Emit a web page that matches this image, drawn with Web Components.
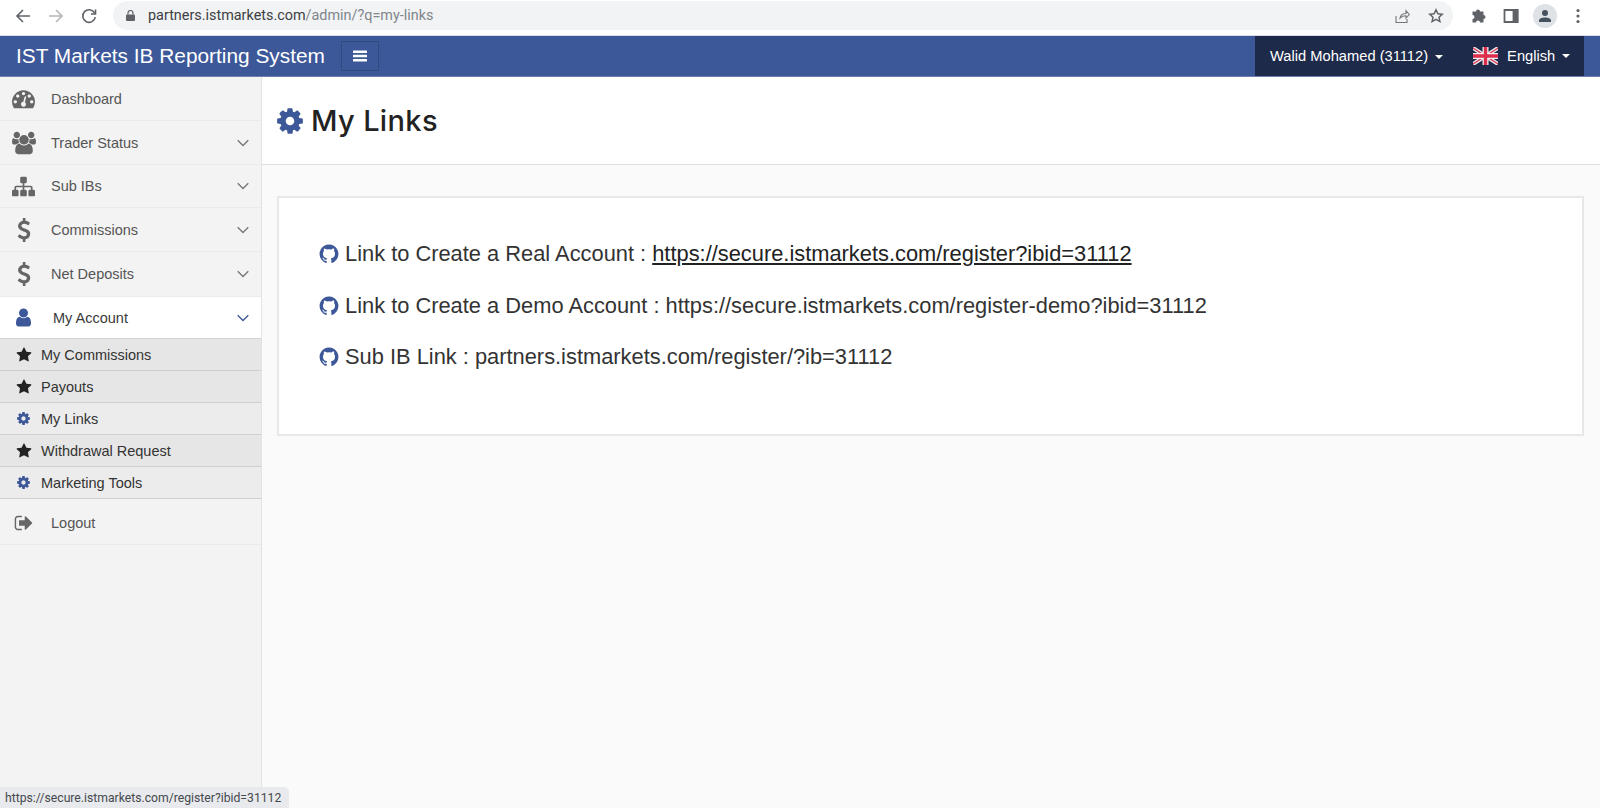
<!DOCTYPE html>
<html lang="en">
<head>
<meta charset="utf-8">
<title>My Links</title>
<style>
  html, body { margin: 0; height: 100%; overflow: hidden; }
  body { font-family: "Liberation Sans", Arial, sans-serif; display: flex; flex-direction: column; height: 808px; background: #fafafa; }
</style>
</head>
<body>
<browser-bar url-host="partners.istmarkets.com" url-path="/admin/?q=my-links"></browser-bar>
<top-header title="IST Markets IB Reporting System" user="Walid Mohamed (31112)" lang="English"></top-header>
<app-shell>
  <side-nav slot="nav">
    <nav-item icon="dashboard" label="Dashboard" h="44"></nav-item>
    <nav-item icon="users" label="Trader Status" arrow h="44"></nav-item>
    <nav-item icon="sitemap" label="Sub IBs" arrow h="43"></nav-item>
    <nav-item icon="dollar" label="Commissions" arrow h="44"></nav-item>
    <nav-item icon="dollar" label="Net Deposits" arrow h="45"></nav-item>
    <nav-item icon="user" label="My Account" arrow active h="42"></nav-item>
    <sub-item icon="star" label="My Commissions"></sub-item>
    <sub-item icon="star" label="Payouts"></sub-item>
    <sub-item icon="cog" label="My Links"></sub-item>
    <sub-item icon="star" label="Withdrawal Request"></sub-item>
    <sub-item icon="cog" label="Marketing Tools"></sub-item>
    <nav-item icon="signout" label="Logout" h="44" gap></nav-item>
  </side-nav>
  <page-title>My Links</page-title>
  <link-card>
    <link-row label="Link to Create a Real Account : "><u>https://secure.istmarkets.com/register?ibid=31112</u></link-row>
    <link-row label="Link to Create a Demo Account : ">https://secure.istmarkets.com/register-demo?ibid=31112</link-row>
    <link-row label="Sub IB Link : ">partners.istmarkets.com/register/?ib=31112</link-row>
  </link-card>
</app-shell>
<status-bubble>https://secure.istmarkets.com/register?ibid=31112</status-bubble>

<script>
const ICONS = {
  cog: ['0 0 1792 1792', 'M1152 896q0-106-75-181t-181-75-181 75-75 181 75 181 181 75 181-75 75-181zm512-109v222q0 12-8 23t-20 13l-185 28q-19 54-39 91 35 50 107 138 10 12 10 25t-9 23q-27 37-99 108t-94 71q-12 0-26-9l-138-108q-44 23-91 38-16 136-29 186-7 28-36 28h-222q-14 0-24.500-8.500t-11.500-21.500l-28-184q-49-16-90-37l-141 107q-10 9-25 9-14 0-25-11-126-114-165-168-7-10-7-23 0-12 8-23 15-21 51-66.500t54-70.500q-27-50-41-99l-183-27q-13-2-21-12.500t-8-23.500v-222q0-12 8-23t19-13l186-28q14-46 39-92-40-57-107-138-10-12-10-24 0-10 9-23 26-36 98.500-107.500t94.500-71.500q13 0 26 10l138 107q44-23 91-38 16-136 29-186 7-28 36-28h222q14 0 24.500 8.500t11.500 21.500l28 184q49 16 90 37l142-107q9-9 24-9 13 0 25 10 129 119 165 170 7 8 7 22 0 12-8 23-15 21-51 66.500t-54 70.500q26 50 41 98l183 28q13 2 21 12.500t8 23.500z'],
  star: ['0 0 1792 1792', 'M1728 647q0 22-26 48l-363 354 86 500q1 7 1 20 0 21-10.500 35.500t-30.500 14.500q-19 0-40-12l-449-236-449 236q-22 12-40 12-21 0-31.500-14.500t-10.500-35.500q0-6 2-20l86-500-364-354q-25-27-25-48 0-37 56-46l502-73 225-455q19-41 49-41t49 41l225 455 502 73q56 9 56 46z'],
  user: ['0 0 1792 1792', 'M1536 1399q0 109-62.500 187t-150.500 78h-854q-88 0-150.500-78t-62.500-187q0-85 8.500-160.500t31.500-152 58.500-131 94-89 134.500-34.500q131 128 313 128t313-128q76 0 134.500 34.500t94 89 58.500 131 31.500 152 8.500 160.500zm-256-887q0 159-112.500 271.500t-271.500 112.500-271.500-112.500-112.500-271.500 112.500-271.500 271.500-112.500 271.500 112.500 112.500 271.500z'],
  users: ['0 0 1920 1792', 'M593 896q-162 5-265 128h-134q-82 0-138-40.500t-56-118.500q0-353 124-353 6 0 43.500 21t97.500 42.500 119 21.500q67 0 133-23-5 37-5 66 0 139 81 256zm1071 637q0 120-73 189.500t-194 69.500h-874q-121 0-194-69.500t-73-189.500q0-53 3.500-103.500t14-109 26.500-108.500 43-97.500 62-81 85.500-53.500 111.500-20q10 0 43 21.500t73 48 107 48 135 21.500 135-21.500 107-48 73-48 43-21.500q61 0 111.500 20t85.500 53.500 62 81 43 97.500 26.500 108.500 14 109 3.500 103.500zm-1024-1277q0 106-75 181t-181 75-181-75-75-181 75-181 181-75 181 75 75 181zm704 384q0 159-112.500 271.500t-271.500 112.500-271.500-112.500-112.500-271.500 112.500-271.500 271.500-112.500 271.500 112.500 112.500 271.500zm576 225q0 78-56 118.500t-138 40.500h-134q-103-123-265-128 81-117 81-256 0-29-5-66 66 23 133 23 59 0 119-21.500t97.500-42.500 43.500-21q124 0 124 353zm-128-609q0 106-75 181t-181 75-181-75-75-181 75-181 181-75 181 75 75 181z'],
  sitemap: ['0 0 1792 1792', 'M1792 1248v320q0 40-28 68t-68 28h-320q-40 0-68-28t-28-68v-320q0-40 28-68t68-28h96v-192h-512v192h96q40 0 68 28t28 68v320q0 40-28 68t-68 28h-320q-40 0-68-28t-28-68v-320q0-40 28-68t68-28h96v-192h-512v192h96q40 0 68 28t28 68v320q0 40-28 68t-68 28h-320q-40 0-68-28t-28-68v-320q0-40 28-68t68-28h96v-192q0-52 38-90t90-38h512v-192h-96q-40 0-68-28t-28-68v-320q0-40 28-68t68-28h320q40 0 68 28t28 68v320q0 40-28 68t-68 28h-96v192h512q52 0 90 38t38 90v192h96q40 0 68 28t28 68z'],
  dollar: ['0 0 1792 1792', 'M1362 1185q0 153-99.500 263.500t-258.500 136.500v175q0 14-9 23t-23 9h-135q-13 0-22.500-9.500t-9.500-22.500v-175q-66-9-127.500-31t-101.500-44.500-74-48-46.500-37.500-17.500-18q-17-21-2-41l103-135q7-10 23-12 15-2 24 9l2 2q113 99 243 125 37 8 74 8 81 0 142.500-43t61.500-122q0-28-15-53t-33.500-42-58.500-37.500-66-32-80-32.500q-39-16-61.500-25t-61.500-26.500-62.500-31-56.500-35.500-53.500-42.500-43.500-49-35.500-58-21-66.500-8.500-78q0-138 98-242t255-134v-180q0-13 9.500-22.500t22.500-9.500h135q14 0 23 9t9 23v176q57 6 110.500 23t87 33.500 63.500 37.500 39 29 15 14q17 18 5 38l-81 146q-8 15-23 16-14 3-27-7-3-3-14.500-12t-39-26.500-58.500-32-74.500-26-85.500-11.500q-95 0-155 43t-60 111q0 26 8.500 48t29.500 41.500 39.500 33 56 31 60.500 27 70 27.500q53 20 81 31.500t76 35 75.500 42.500 62 50 53 63.500 31.500 76.500 13 94z'],
  signout: ['0 0 1792 1792', 'M704 1440q0 4 1 20t.5 26.500-3 23.500-10 19.500-20.500 6.500h-320q-119 0-203.500-84.500t-84.500-203.500v-704q0-119 84.500-203.500t203.500-84.500h320q13 0 22.500 9.500t9.500 22.500q0 4 1 20t.5 26.500-3 23.500-10 19.500-20.500 6.500h-320q-66 0-113 47t-47 113v704q0 66 47 113t113 47h312l11.500 1 11.500 3 8 5.500 7 9 2 13.500zm928-544q0 26-19 45l-544 544q-19 19-45 19t-45-19-19-45v-288h-448q-26 0-45-19t-19-45v-384q0-26 19-45t45-19h448v-288q0-26 19-45t45-19 45 19l544 544q19 19 19 45z'],
  github: ['0 0 1792 1792', 'M896 128q209 0 385.500 103t279.500 279.500 103 385.500q0 251-146.500 451.500t-378.500 277.500q-27 5-40-7t-13-30q0-3 .5-76.500t.5-134.500q0-97-52-142 57-6 102.500-18t94-39 81-66.500 53-105 20.500-150.500q0-119-79-206 37-91-8-204-28-9-81 11t-92 44l-38 24q-93-26-192-26t-192 26q-16-11-42.500-27t-83.500-38.500-85-13.500q-45 113-8 204-79 87-79 206 0 85 20.500 150t52.500 105 80.500 67 94 39 102.500 18q-39 36-49 103-21 10-45 15t-57 5-65.500-21.500-55.500-62.500q-19-32-48.500-52t-49.500-24l-20-3q-21 0-29 4.500t-5 11.500 9 14 13 12l7 5q22 10 43.500 38t31.500 51l10 23q13 38 44 61.500t67 30 69.500 7 55.500-3.500l23-4q0 38 .5 88.500t.5 54.500q0 18-13 30t-40 7q-232-77-378.500-277.500t-146.500-451.500q0-209 103-385.500t279.500-279.500 385.500-103z'],
  dashboard: ['0 0 1792 1792', 'M384 1152q0-53-37.500-90.500t-90.500-37.500-90.500 37.500-37.500 90.500 37.500 90.500 90.500 37.500 90.500-37.500 37.500-90.500zm192-448q0-53-37.500-90.500t-90.500-37.500-90.500 37.500-37.500 90.500 37.500 90.500 90.500 37.500 90.500-37.500 37.500-90.500zm428 481l101-382q6-26-7.500-48.500t-38.500-29.500-48 6.500-30 39.500l-101 382q-60 5-107 43.500t-63 98.500q-20 77 20 146t117 89 146-20 89-117q16-60-6-117t-72-91zm660-33q0-53-37.500-90.500t-90.500-37.500-90.500 37.500-37.500 90.500 37.500 90.500 90.500 37.500 90.500-37.500 37.500-90.500zm-640-640q0-53-37.500-90.500t-90.500-37.500-90.500 37.500-37.500 90.500 37.500 90.500 90.500 37.500 90.500-37.500 37.500-90.500zm448 192q0-53-37.500-90.500t-90.500-37.500-90.500 37.500-37.500 90.500 37.500 90.500 90.500 37.500 90.500-37.500 37.500-90.500zm320 448q0 261-141 483-19 29-54 29h-1402q-35 0-54-29-141-221-141-483 0-182 71-348t191-286 286-191 348-71 348 71 286 191 191 286 71 348z']
};

function icon(name, size) {
  const [box, d] = ICONS[name];
  return `<svg width="${size}" height="${size}" viewBox="${box}" fill="currentColor" fill-rule="evenodd" aria-hidden="true"><path d="${d}"/></svg>`;
}

const CHEVRON = `<svg width="12" height="8" viewBox="0 0 12 8" fill="none" stroke="currentColor" stroke-width="1.300"><path d="M.7 1.200l5.300 5.300 5.300-5.300"/></svg>`;

class BrowserBar extends HTMLElement {
  connectedCallback() {
    this.attachShadow({ mode: 'open' });
    this.shadowRoot.innerHTML = `
    <style>
      :host { display: flex; align-items: center; height: 35px; flex: none; background: #fff; box-sizing: border-box; padding: 0 0 4px; color: #5f6368; }
      .nav { display: flex; align-items: center; gap: 17px; padding-left: 15px; width: 98px; flex: none; }
      .omni { display: flex; align-items: center; width: 1340px; height: 29px; background: #f1f3f4; border-radius: 15px; flex: none; box-sizing: border-box; padding: 0 9px 0 13px; }
      .lock { margin-right: 13px; display: flex; }
      .url { font: 14.400px Roboto, sans-serif; color: #80868b; white-space: nowrap; flex: 1; }
      .url b { font-weight: 400; color: #3c4043; }
      .end { display: flex; gap: 18px; align-items: center; }
      .tools { display: flex; align-items: center; margin-left: 17px; }
      .tools > :nth-child(2) { margin-left: 17px; }
      .avatar { width: 24px; height: 24px; margin-left: 14px; border-radius: 50%; background: #dee1e6; display: flex; align-items: center; justify-content: center; color: #45515e; }
    </style>
    <div class="nav">
      <svg width="16" height="16" viewBox="0 0 16 16" fill="none" stroke="#5f6368" stroke-width="1.600"><path d="M15 8H2M8 2L2 8l6 6"/></svg>
      <svg width="16" height="16" viewBox="0 0 16 16" fill="none" stroke="#b4b6b9" stroke-width="1.600"><path d="M1 8h13M8 2l6 6-6 6"/></svg>
      <svg width="16" height="16" viewBox="0 0 16 16" fill="none" stroke="#5f6368" stroke-width="1.600"><path d="M13.600 5A6.300 6.300 0 1 0 14.300 9"/><path d="M14.500 1.500v4.500H10" /></svg>
    </div>
    <div class="omni">
      <span class="lock"><svg width="9" height="11" viewBox="0 0 9 11" fill="#5f6368"><path d="M1 4.500h7a1 1 0 0 1 1 1V10a1 1 0 0 1-1 1H1a1 1 0 0 1-1-1V5.500a1 1 0 0 1 1-1z"/><path d="M2 4.500V3a2.500 2.500 0 0 1 5 0v1.500" fill="none" stroke="#5f6368" stroke-width="1.200"/></svg></span>
      <span class="url"><b>${this.getAttribute('url-host')}</b>${this.getAttribute('url-path')}</span>
      <span class="end">
        <svg width="16" height="16" viewBox="0 0 16 16" fill="none" stroke="#73777b" stroke-width="1.100"><path d="M2 8v6.500h11V11M6 10c.6-3 3-4.500 6-4.500V2.800l3.300 3.700-3.300 3.600V7.800C9.500 7.800 7.500 8.500 6 10z"/></svg>
        <svg width="16" height="16" viewBox="0 0 16 16" fill="none" stroke="#5f6368" stroke-width="1.500"><path d="M8 1.800l1.900 4 4.300.5-3.200 3 .9 4.300L8 11.400l-3.900 2.200.9-4.300-3.200-3 4.300-.5z"/></svg>
      </span>
    </div>
    <div class="tools">
      <svg width="16" height="16" viewBox="0 0 16 16" fill="#5f6368"><path d="M1 4.500h3.500a2 2 0 0 1 4 0H12v3.500a2 2 0 0 1 0 4V15.500H8.500a2 2 0 0 0-4 0H1v-3.500a2 2 0 0 0 0-4z" transform="translate(1.500 -1)"/></svg>
      <svg width="16" height="16" viewBox="0 0 16 16" fill="none" stroke="#5f6368" stroke-width="1.800"><path d="M1.500 2h13v12h-13z"/><path d="M10.500 2v12h4V2z" fill="#5f6368"/></svg>
      <span class="avatar"><svg width="14" height="14" viewBox="0 0 14 14" fill="currentColor"><circle cx="7" cy="4" r="3"/><path d="M1 13v-1.500C1 9.500 4 8.500 7 8.500s6 1 6 3V13z"/></svg></span>
      <svg width="4" height="16" viewBox="0 0 4 16" fill="#5f6368" style="margin-left:19px"><circle cx="2" cy="2.500" r="1.600"/><circle cx="2" cy="8" r="1.600"/><circle cx="2" cy="13.500" r="1.600"/></svg>
    </div>`;
  }
}

class TopHeader extends HTMLElement {
  connectedCallback() {
    this.attachShadow({ mode: 'open' });
    this.shadowRoot.innerHTML = `
    <style>
      :host { display: flex; align-items: center; height: 42px; flex: none; background: #3c5899; color: #fff; padding: 0 16px; font-family: "Liberation Sans", Arial, sans-serif; box-sizing: border-box; border-top: 1px solid #d8deea; border-bottom: 1px solid #6d80ae; }
      .brand { font-size: 20.850px; white-space: nowrap; width: 325px; }
      .toggle { width: 38px; height: 30px; box-sizing: border-box; border: 1px solid #324a82; background: #3c5899; display: flex; align-items: center; justify-content: center; }
      .spacer { flex: 1; }
      .menu { display: flex; align-items: center; align-self: stretch; width: 329px; background: #1e2a4a; font-size: 14.700px; white-space: nowrap; box-sizing: border-box; padding-left: 15px; }
      .caret { display: inline-block; width: 0; height: 0; margin-left: 7px; border-left: 4px solid transparent; border-right: 4px solid transparent; border-top: 4px solid #fff; vertical-align: middle; }
      .lang { display: flex; align-items: center; margin-left: 30px; }
      .lang svg { margin-right: 9px; }
    </style>
    <div class="brand">${this.getAttribute('title')}</div>
    <div class="toggle"><svg width="14" height="12" viewBox="0 0 14 12" fill="#fff"><rect y="0.500" width="14" height="2.500" rx=".5"/><rect y="4.800" width="14" height="2.500" rx=".5"/><rect y="9" width="14" height="2.500" rx=".5"/></svg></div>
    <div class="spacer"></div>
    <div class="menu">
      <span>${this.getAttribute('user')}<i class="caret"></i></span>
      <span class="lang">
        <svg width="25" height="18" viewBox="0 0 25 18"><path d="M0 1l25 16M25 1L0 17" stroke="#eee8ee" stroke-width="4"/><path d="M0 1l25 16M25 1L0 17" stroke="#d63852" stroke-width="1.400"/><path d="M12.500 0v18M0 9h25" stroke="#f2eef0" stroke-width="6"/><path d="M12.500 0v18M0 9h25" stroke="#dc2f4c" stroke-width="3.400"/></svg>
        ${this.getAttribute('lang')}<i class="caret"></i>
      </span>
    </div>`;
  }
}

class AppShell extends HTMLElement {
  constructor() {
    super();
    this.attachShadow({ mode: 'open' });
    this.shadowRoot.innerHTML = `
    <style>
      :host { display: grid; grid-template-columns: 262px 1fr; flex: 1; min-height: 0; }
      main { display: flex; flex-direction: column; min-width: 0; }
    </style>
    <slot name="nav"></slot>
    <main><slot></slot></main>`;
  }
}

class SideNav extends HTMLElement {
  constructor() {
    super();
    this.attachShadow({ mode: 'open' });
    this.shadowRoot.innerHTML = `
    <style>
      :host { display: flex; flex-direction: column; background: #f3f3f3; border-right: 1px solid #e3e3e3; box-sizing: border-box; height: 100%; }
    </style>
    <slot></slot>`;
  }
}

class NavItem extends HTMLElement {
  connectedCallback() {
    this.attachShadow({ mode: 'open' });
    const name = this.getAttribute('icon');
    const active = this.hasAttribute('active');
    const sizes = { dashboard: 23, users: 24, sitemap: 23, dollar: 24, user: 21, signout: 20 };
    this.shadowRoot.innerHTML = `
    <style>
      :host { display: flex; align-items: center; height: ${this.getAttribute('h')}px; flex: none; box-sizing: border-box; border-bottom: 1px solid #ebebeb; padding-right: 12px; color: #555; font-size: 14.500px; }
      :host([active]) { background: #fff; color: #3a3a3a; border-bottom-color: #d4d4d4; }
      :host([gap]) { margin-top: 2px; }
      .ico { width: 47px; display: flex; justify-content: center; flex: none; color: ${active ? '#3c5899' : '#666'}; }
      .label { flex: 1; margin-left: ${active ? 6 : 4}px; white-space: nowrap; }
      .arrow { display: flex; color: ${active ? '#3c5899' : '#777'}; }
    </style>
    <span class="ico">${icon(name, sizes[name])}</span>
    <span class="label">${this.getAttribute('label')}</span>
    ${this.hasAttribute('arrow') ? `<span class="arrow">${CHEVRON}</span>` : ''}`;
  }
}

class SubItem extends HTMLElement {
  connectedCallback() {
    this.attachShadow({ mode: 'open' });
    const name = this.getAttribute('icon');
    this.shadowRoot.innerHTML = `
    <style>
      :host { display: flex; align-items: center; height: 32px; flex: none; box-sizing: border-box; background: #e6e6e6; border-bottom: 1px solid #cfcfcf; color: #333; font-size: 14.500px; }
      :host([icon="cog"]) { background: #ececec; }
      .ico { width: 41px; display: flex; justify-content: center; padding-left: 6px; box-sizing: border-box; flex: none; color: ${name === 'cog' ? '#3c5899' : '#222'}; }
    </style>
    <span class="ico">${icon(name, name === 'cog' ? 15 : 16)}</span>
    <span>${this.getAttribute('label')}</span>`;
  }
}

class PageTitle extends HTMLElement {
  constructor() {
    super();
    this.attachShadow({ mode: 'open' });
    this.shadowRoot.innerHTML = `
    <style>
      :host { display: flex; align-items: center; height: 88px; flex: none; box-sizing: border-box; background: #fff; border-bottom: 1px solid #ddd; padding-left: 13px; color: #222; font: 500 29px Inter, sans-serif; letter-spacing: .35px; }
      span { display: flex; color: #3c5899; margin-right: 6px; }
    </style>
    <span>${icon('cog', 30)}</span><slot></slot>`;
  }
}

class LinkCard extends HTMLElement {
  constructor() {
    super();
    this.attachShadow({ mode: 'open' });
    this.shadowRoot.innerHTML = `
    <style>
      :host { display: flex; flex-direction: column; height: 240px; box-sizing: border-box; margin: 31px 16px 0 15px; background: #fff; border: 2px solid #e8e8e8; padding: 41px 40px 0 39px; gap: 21.500px; }
    </style>
    <slot></slot>`;
  }
}

class LinkRow extends HTMLElement {
  connectedCallback() {
    this.attachShadow({ mode: 'open' });
    this.shadowRoot.innerHTML = `
    <style>
      :host { display: flex; align-items: center; height: 30px; color: #333; font-size: 21.850px; white-space: nowrap; }
      span { display: flex; color: #3c5899; margin-right: 5px; }
      p { margin: 0; }
      ::slotted(u) { color: #222; }
    </style>
    <span>${icon('github', 22)}</span><p>${this.getAttribute('label').replace(/ $/, '&nbsp;')}<slot></slot></p>`;
  }
}

class StatusBubble extends HTMLElement {
  constructor() {
    super();
    this.attachShadow({ mode: 'open' });
    this.shadowRoot.innerHTML = `
    <style>
      :host { position: fixed; left: 0; bottom: 0; height: 21px; display: flex; align-items: center; box-sizing: border-box; padding: 0 8px 0 5px; background: #e8eaed; border-top-right-radius: 5px; color: #45494e; font: 12.200px Roboto, sans-serif; }
    </style>
    <slot></slot>`;
  }
}

customElements.define('browser-bar', BrowserBar);
customElements.define('top-header', TopHeader);
customElements.define('app-shell', AppShell);
customElements.define('side-nav', SideNav);
customElements.define('nav-item', NavItem);
customElements.define('sub-item', SubItem);
customElements.define('page-title', PageTitle);
customElements.define('link-card', LinkCard);
customElements.define('link-row', LinkRow);
customElements.define('status-bubble', StatusBubble);
</script>
</body>
</html>
